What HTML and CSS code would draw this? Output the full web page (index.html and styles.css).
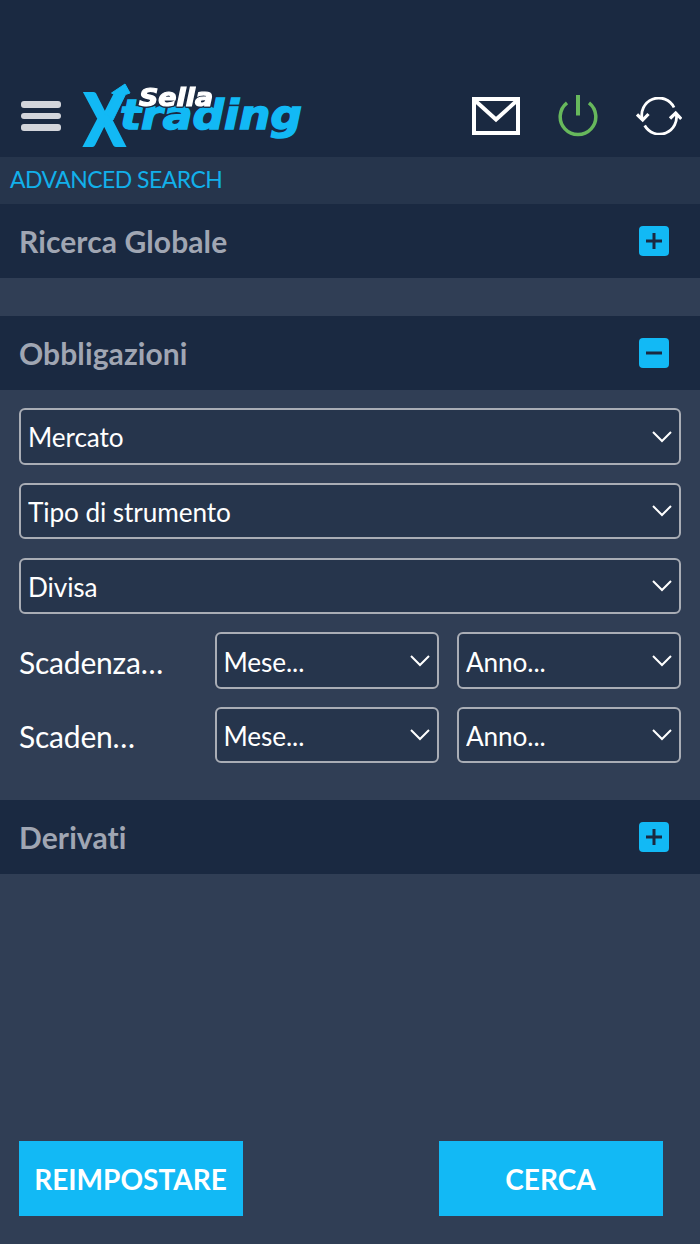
FILE: index.html
```html
<!DOCTYPE html>
<html lang="it">
<head>
    <meta charset="UTF-8">
    <meta name="viewport" content="width=device-width, initial-scale=1.0">
    <title>Sella Xtrading - Advanced Search</title>
    <link rel="stylesheet" href="styles.css">
</head>
<body>

    <!-- Header -->
    <header>
        <button class="menu-btn" aria-label="Menu">
            <span></span>
            <span></span>
            <span></span>
        </button>

        <svg class="logo" width="224" height="68" viewBox="0 0 224 68" role="img" aria-label="Sella Xtrading">
            <text class="logo-x" x="2" y="64" textLength="41" lengthAdjust="spacingAndGlyphs">X</text>
            <path class="logo-arrow" d="M25 33 L34 13 L29.500 11 L43 2 L48 11 L43.500 12.500 L31 38 Z"/>
            <text class="logo-name" x="38" y="47" textLength="182" lengthAdjust="spacingAndGlyphs">trading</text>
            <text class="logo-brand" x="57" y="24" textLength="74" lengthAdjust="spacingAndGlyphs">Sella</text>
        </svg>

        <nav>
            <a href="#" aria-label="Messaggi">
                <svg width="48" height="38" viewBox="0 0 48 38" fill="none" stroke="#fff" stroke-width="4">
                    <path d="M2 2 H46 V36 H2 Z"/>
                    <path d="M3 3.500 L24 22.500 L45 3.500"/>
                </svg>
            </a>
            <a href="#" aria-label="Esci">
                <svg width="40" height="42" viewBox="0 0 40 42" fill="none" stroke="#67b85c" stroke-width="3.500">
                    <path d="M20 0 V20.500" stroke-width="4"/>
                    <path d="M9 7.800 A17.800 17.800 0 1 0 31 7.800"/>
                </svg>
            </a>
            <a href="#" aria-label="Aggiorna">
                <svg width="46" height="38" viewBox="0 0 46 38" fill="none" stroke="#fff" stroke-width="2.800">
                    <path d="M38 10.500 A17 17 0 0 0 6.500 23"/>
                    <path d="M8.700 28.500 A17 17 0 0 0 40 16"/>
                    <path d="M1 17.500 L6.700 23 L12.500 17" stroke-width="3.200"/>
                    <path d="M34 21.500 L39.700 16 L45.300 22" stroke-width="3.200"/>
                </svg>
            </a>
        </nav>
    </header>

    <div class="page-title">ADVANCED SEARCH</div>

    <!-- Search sections -->
    <main>
        <section>
            <div class="section-header">
                <h2>Ricerca Globale</h2>
                <button class="toggle" aria-label="Apri">
                    <svg width="30" height="30" viewBox="0 0 30 30"><path d="M7 15 H23 M15 7 V23"/></svg>
                </button>
            </div>
        </section>

        <section>
            <div class="section-header">
                <h2>Obbligazioni</h2>
                <button class="toggle" aria-label="Chiudi">
                    <svg width="30" height="30" viewBox="0 0 30 30"><path d="M7 15 H23"/></svg>
                </button>
            </div>
            <form class="filters">
                <div class="select-box">
                    <select><option>Mercato</option></select>
                    <svg class="arrow" width="20" height="12" viewBox="0 0 20 12"><path d="M1 1 L10 10 L19 1"/></svg>
                </div>
                <div class="select-box">
                    <select><option>Tipo di strumento</option></select>
                    <svg class="arrow" width="20" height="12" viewBox="0 0 20 12"><path d="M1 1 L10 10 L19 1"/></svg>
                </div>
                <div class="select-box">
                    <select><option>Divisa</option></select>
                    <svg class="arrow" width="20" height="12" viewBox="0 0 20 12"><path d="M1 1 L10 10 L19 1"/></svg>
                </div>
                <div class="date-row">
                    <label>Scadenza…</label>
                    <div class="select-box">
                        <select><option>Mese...</option></select>
                        <svg class="arrow" width="20" height="12" viewBox="0 0 20 12"><path d="M1 1 L10 10 L19 1"/></svg>
                    </div>
                    <div class="select-box">
                        <select><option>Anno...</option></select>
                        <svg class="arrow" width="20" height="12" viewBox="0 0 20 12"><path d="M1 1 L10 10 L19 1"/></svg>
                    </div>
                </div>
                <div class="date-row">
                    <label>Scaden…</label>
                    <div class="select-box">
                        <select><option>Mese...</option></select>
                        <svg class="arrow" width="20" height="12" viewBox="0 0 20 12"><path d="M1 1 L10 10 L19 1"/></svg>
                    </div>
                    <div class="select-box">
                        <select><option>Anno...</option></select>
                        <svg class="arrow" width="20" height="12" viewBox="0 0 20 12"><path d="M1 1 L10 10 L19 1"/></svg>
                    </div>
                </div>
            </form>
        </section>

        <section>
            <div class="section-header">
                <h2>Derivati</h2>
                <button class="toggle" aria-label="Apri">
                    <svg width="30" height="30" viewBox="0 0 30 30"><path d="M7 15 H23 M15 7 V23"/></svg>
                </button>
            </div>
        </section>
    </main>

    <!-- Bottom buttons -->
    <footer>
        <button class="btn">REIMPOSTARE</button>
        <button class="btn">CERCA</button>
    </footer>

</body>
</html>
```
FILE: styles.css
```css
/* General Styles */
* {
    box-sizing: border-box;
}

body {
    font-family: Lato, sans-serif;
    font-variant-ligatures: none;
    margin: 0;
    height: 100vh;
    display: flex;
    flex-direction: column;
    background-color: #303e55;
    color: #fff;
}

button {
    border: 0;
    padding: 0;
    font-family: inherit;
}

/* Header */
header {
    height: 157px;
    padding: 75px 18.500px 0 21px;
    display: flex;
    align-items: center;
    background-color: #1a2941;
}

.menu-btn {
    width: 40px;
    display: flex;
    flex-direction: column;
    gap: 5px;
    background: none;
}

.menu-btn span {
    height: 6.5px;
    border-radius: 3px;
    background-color: #d3d5db;
}

/* Logo */
.logo {
    margin-left: 21px;
    overflow: visible;
}

.logo text {
    font-family: "DejaVu Sans", sans-serif;
    font-weight: bold;
    font-style: oblique;
}

.logo .logo-x {
    font-family: Lato, sans-serif;
    font-weight: 900;
    font-style: normal;
    font-size: 72px;
    fill: #12b9f5;
    stroke: #12b9f5;
    stroke-width: 2px;
}

.logo-arrow {
    fill: #12b9f5;
    stroke: #12b9f5;
    stroke-width: 1px;
}

.logo-name {
    font-size: 40px;
    fill: #12b9f5;
    stroke: #12b9f5;
    stroke-width: 1.5px;
}

.logo-brand {
    font-size: 24px;
    fill: #fff;
    stroke: #fff;
    stroke-width: 1.2px;
    filter: drop-shadow(0 1px 0 #1a2941) drop-shadow(-1px 0 0 #1a2941) drop-shadow(1px 0 0 #1a2941);
}

header nav {
    margin-left: auto;
    display: flex;
    align-items: center;
    gap: 38px;
}

header nav a,
header nav svg {
    display: block;
}

/* Page title */
.page-title {
    height: 47px;
    padding-left: 10px;
    line-height: 44px;
    font-size: 23px;
    letter-spacing: -0.55px;
    color: #12b0ea;
    background-color: #26354c;
}

/* Sections */
main {
    flex: 1;
    display: flex;
    flex-direction: column;
    gap: 37.5px;
}

.section-header {
    height: 74px;
    padding: 0 31px 0 19px;
    display: flex;
    align-items: center;
    justify-content: space-between;
    background-color: #1a2941;
}

.section-header h2 {
    margin: 0;
    font-size: 30px;
    font-weight: 700;
    letter-spacing: 0.1px;
    color: #a0a6b3;
}

.toggle {
    width: 30px;
    height: 30px;
    border-radius: 4px;
    background-color: #12b9f5;
}

.toggle svg {
    display: block;
    stroke: #1a2941;
    stroke-width: 3px;
}

/* Filters */
.filters {
    margin-bottom: -0.7px;
    padding: 18.7px 19px 0;
    display: flex;
    flex-direction: column;
    gap: 18.2px;
}

.select-box {
    position: relative;
    height: 56.5px;
}

.select-box select {
    appearance: none;
    width: 100%;
    height: 100%;
    padding: 2px 40px 0 7px;
    font-family: inherit;
    font-variant-ligatures: none;
    font-size: 26.2px;
    letter-spacing: -0.1px;
    color: #fff;
    background-color: #26354c;
    border: 2px solid #a9adb5;
    border-radius: 6px;
}

.arrow {
    position: absolute;
    right: 9px;
    top: 22.5px;
    fill: none;
    stroke: #fff;
    stroke-width: 2px;
    pointer-events: none;
}

.date-row {
    display: grid;
    grid-template-columns: 177px 1fr 1fr;
    column-gap: 18.5px;
    align-items: center;
}

.date-row label {
    padding-top: 2px;
    font-size: 30px;
    letter-spacing: -0.2px;
}

/* Bottom buttons */
footer {
    padding: 0 37.5px 28px 18.5px;
    display: flex;
    justify-content: space-between;
}

.btn {
    width: 224px;
    height: 75px;
    padding-top: 1px;
    font-size: 28px;
    font-weight: 700;
    color: #fff;
    background-color: #12b9f5;
}
```
